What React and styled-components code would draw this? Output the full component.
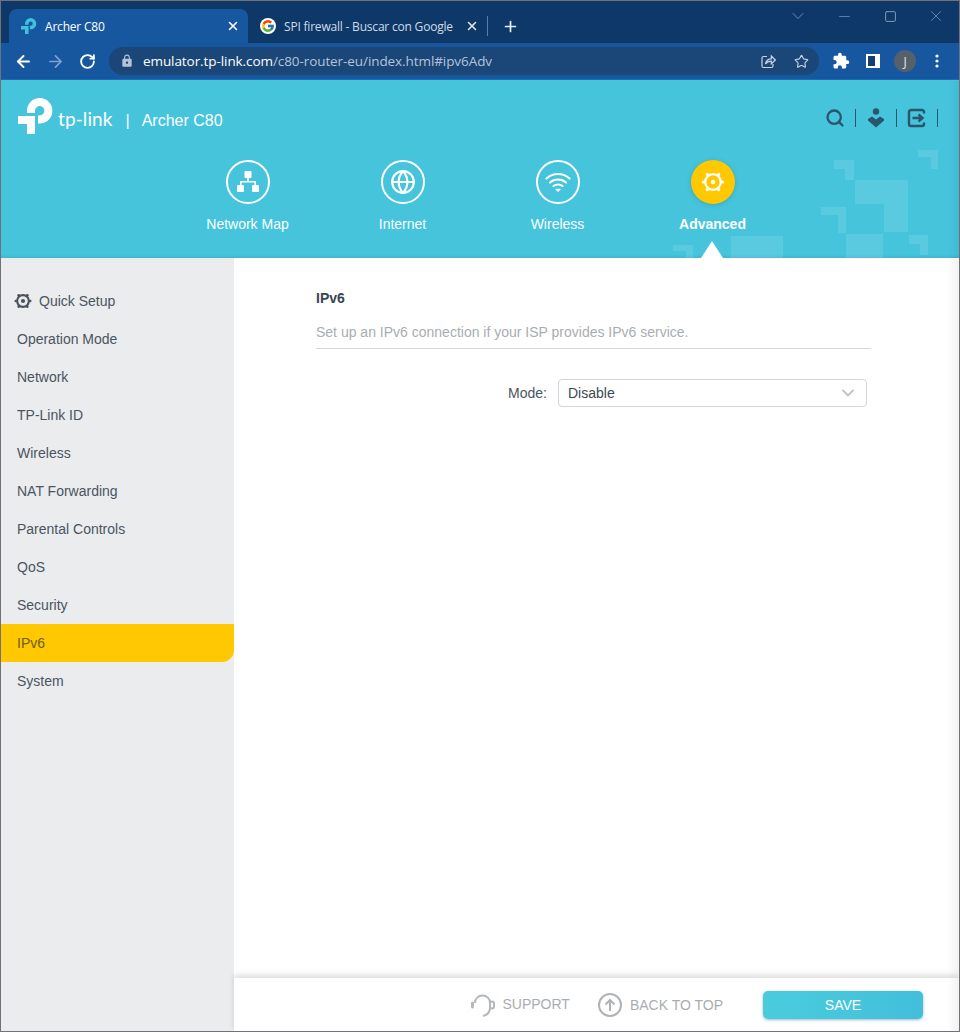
import React from "react";
import styled, { createGlobalStyle } from "styled-components";
import { FcGoogle } from "react-icons/fc";
import { MdExtension, MdLock } from "react-icons/md";
import { ArrowLeft, ArrowRight, RotateCw, Star, Plus, X, ChevronDown, Minus, Square, Search, Globe } from "lucide-react";

const Global = createGlobalStyle`
  html, body { margin: 0; padding: 0; background: #fff; }
  * { box-sizing: border-box; }
  #root { width: 960px; height: 1032px; overflow: hidden; }
`;

const Window = styled.div`
  position: relative;
  width: 960px; height: 1032px;
  border: 1px solid #6e7377;
  display: flex; flex-direction: column;
  font-family: "Liberation Sans", Arial, sans-serif;
  overflow: hidden;
`;

const TabBar = styled.div`
  height: 42px; flex: none;
  background: #0e3868;
  display: flex; align-items: flex-end;
  padding-left: 8px;
  font-family: "Open Sans", "Noto Sans", sans-serif;
  font-size: 12px;
`;
const Tab = styled.div`
  width: 239px; height: 34px;
  display: flex; align-items: center;
  padding: 0 8px 0 12px;
  border-radius: 8px 8px 0 0;
  background: ${p => (p.$active ? "#17579f" : "transparent")};
  color: ${p => (p.$active ? "#fff" : "#cfdbe9")};
  gap: 8px;
`;
const TabTitle = styled.span`
  flex: 1;
  white-space: nowrap;
  letter-spacing: -0.2px;
`;
const TabSeparator = styled.div`
  width: 1px; height: 20px; background: #5d7da2;
  margin: 0 0 7px 0;
`;
const NewTab = styled.div`
  width: 44px; height: 34px; display: flex; align-items: center; justify-content: center;
  color: #e6edf5;
`;
const GoogleBadge = styled.span`
  width: 16px; height: 16px; border-radius: 50%; background: #fff;
  display: flex; align-items: center; justify-content: center;
`;
const WindowControls = styled.div`
  margin-left: auto; align-self: flex-start;
  display: flex; color: #7f9ab8;
  height: 30px; align-items: center;
`;
const WindowButton = styled.div`
  width: 46px; display: flex; align-items: center; justify-content: center;
`;

const Toolbar = styled.div`
  height: 37px; flex: none;
  background: #17579f;
  display: flex; align-items: center;
  border-bottom: 1px solid #1d6bb0;
  color: #fff;
`;
const NavButtons = styled.div`
  display: flex; align-items: center; width: 108px;
`;
const NavButton = styled.div`
  width: 32px; height: 28px;
  display: flex; align-items: center; justify-content: center;
  color: ${p => (p.$dim ? "#7fa3cf" : "#fff")};
  &:first-child { margin-left: 6px; }
`;
const Omnibox = styled.div`
  width: 710px; height: 28px; border-radius: 14px;
  background: #1b4678;
  display: flex; align-items: center;
  padding: 0 1px 0 11px;
  color: #b4c4d8;
  font-family: "Open Sans", "Noto Sans", sans-serif;
  font-size: 13.5px;
`;
const Url = styled.span`
  margin-left: 9px; flex: 1; white-space: nowrap;
  letter-spacing: -0.08px;
  b { font-weight: 400; color: #fff; }
`;
const OmniIcon = styled.span`
  width: 33px; display: flex; align-items: center; justify-content: center; color: #c6d3e3;
`;
const ToolActions = styled.div`
  display: flex; align-items: center; padding-left: 6px;
`;
const ToolAction = styled.div`
  width: 32px; height: 28px; display: flex; align-items: center; justify-content: center;
`;
const Avatar = styled.div`
  width: 22px; height: 22px; border-radius: 50%; background: #55606a;
  color: #e4e8ec; font-size: 12px; font-family: "Open Sans", sans-serif;
  display: flex; align-items: center; justify-content: center;
`;
const PanelIcon = styled.div`
  width: 14px; height: 14px; border: 2px solid #fff; border-right-width: 5px; background: #123f75;
`;

const Header = styled.header`
  position: relative;
  height: 178px; flex: none;
  background: #45c4dc;
  color: #fff;
  padding: 18px 0 0 17px;
  box-shadow: inset 0 -3px 3px -2px rgba(40,120,140,.25);
`;
const Decor = styled.svg`
  position: absolute; left: 0; top: 0; pointer-events: none;
`;
const TopRow = styled.div`
  position: relative;
  display: flex; align-items: center; height: 36px;
`;
const Brand = styled.div`
  display: flex; align-items: center; margin-top: 9px;
`;
const Wordmark = styled.span`
  font-family: Lato, "Open Sans", sans-serif;
  font-size: 19px; letter-spacing: 0.1px; margin-left: 4px; line-height: 1;
  position: relative; top: -2px;
`;
const Divider = styled.span`
  margin-left: 13px; font-size: 16px;
`;
const Model = styled.span`
  margin-left: 12px; font-size: 16px;
`;
const HeaderTools = styled.div`
  margin: 4px 21px 0 auto;
  display: flex; align-items: center; color: #29566a;
`;
const HeaderTool = styled.div`
  width: 41px; height: 18px; display: flex; align-items: center; justify-content: flex-start;
  padding-left: 10px;
  border-right: 1px solid #29566a;
`;
const Nav = styled.nav`
  position: relative;
  display: flex; margin: 26px 0 0 152px;
`;
const NavItem = styled.div`
  width: 155px; display: flex; flex-direction: column; align-items: center;
  font-size: 14px; font-weight: ${p => (p.$active ? 700 : 400)};
`;
const NavCircle = styled.div`
  width: 44px; height: 44px; border-radius: 50%;
  border: ${p => (p.$active ? "none" : "2px solid #fff")};
  background: ${p => (p.$active ? "#ffc800" : "transparent")};
  box-shadow: ${p => (p.$active ? "0 1px 4px rgba(60,110,120,.35)" : "none")};
  display: flex; align-items: center; justify-content: center;
  margin-bottom: 12px;
`;
const Pointer = styled.div`
  position: absolute; left: 700px; bottom: 0;
  width: 0; height: 0;
  border-left: 11px solid transparent; border-right: 11px solid transparent;
  border-bottom: 17px solid #fff;
`;

const Body = styled.div`
  flex: 1; display: flex; min-height: 0;
`;
const Sidebar = styled.aside`
  width: 233px; flex: none; background: #ebecee;
  padding-top: 24px;
  font-size: 14px; color: #4a555f;
`;
const SideItem = styled.div`
  height: 38px; display: flex; align-items: center;
  padding-left: ${p => (p.$icon ? "13px" : "16px")};
  gap: 7px;
  background: ${p => (p.$active ? "#ffc800" : "transparent")};
  color: ${p => (p.$active ? "#6e5d1c" : "inherit")};
  border-bottom-right-radius: ${p => (p.$active ? "12px" : "0")};
`;
const Main = styled.main`
  flex: 1; display: flex; flex-direction: column; background: #fff; min-width: 0;
`;
const Content = styled.section`
  flex: 1; padding: 32px 0 0 82px;
`;
const Title = styled.h1`
  margin: 0; font-size: 14px; line-height: 16px; font-weight: 700; color: #3a4550;
`;
const Description = styled.p`
  margin: 18px 0 0; width: 555px; height: 25px;
  font-size: 14px; line-height: 16px; color: #a9adb1;
  border-bottom: 1px solid #d5d7d9;
`;
const FormRow = styled.div`
  display: flex; align-items: center; margin-top: 30px; height: 28px;
  width: 551px;
`;
const FieldLabel = styled.label`
  width: 231px; text-align: right; font-size: 14px; color: #4a555f;
`;
const Select = styled.div`
  margin-left: 11px; flex: 1; height: 28px;
  border: 1px solid #d3d5d7; border-radius: 4px;
  display: flex; align-items: center; justify-content: space-between;
  padding: 0 8px 0 9px;
  font-size: 14px; color: #3d4750;
`;
const Footer = styled.footer`
  height: 53px; flex: none; background: #fff;
  box-shadow: 0 -3px 6px rgba(0,0,0,.14);
  display: flex; align-items: center; justify-content: flex-end;
  padding-right: 36px;
  color: #a9adb1; font-size: 14px;
`;
const FooterLink = styled.div`
  display: flex; align-items: center; gap: ${p => p.$space}px; margin-right: ${p => p.$gap}px;
`;
const SupportLabel = styled.span`
  margin-top: -2px;
`;
const SaveButton = styled.button`
  width: 160px; height: 28px; border: none; border-radius: 5px;
  background: linear-gradient(90deg, #4accdd, #42bfdb);
  color: #fff; font: 14px "Liberation Sans", Arial, sans-serif;
  box-shadow: 0 1px 3px rgba(60,120,140,.5);
`;
const RightShade = styled.div`
  position: absolute; right: 0; top: 80px; bottom: 0; width: 12px;
  background: linear-gradient(90deg, rgba(0,0,0,0), rgba(0,0,0,.05));
  pointer-events: none;
`;

const TpMark = ({ size = 36, color = "#fff" }) => (
  <svg width={size} height={size} viewBox="0 0 36 36" fill="none" stroke={color} strokeWidth="8">
    <path d="M0 22H13V36" />
    <path d="M13 15V12.800A8.700 8.700 0 1 1 21.700 21.500H20" />
  </svg>
);
const Hex = ({ size, color, sw = 2.200, dot = 2.200, ear = 1.600 }) => (
  <svg width={size} height={size} viewBox="0 0 24 24" fill="none" stroke={color} strokeWidth={sw}>
    <circle cx="12" cy="12" r="7.800" />
    <circle cx="6.300" cy="4.400" r={ear} fill={color} stroke="none" />
    <circle cx="17.700" cy="4.400" r={ear} fill={color} stroke="none" />
    <circle cx="6.300" cy="19.600" r={ear} fill={color} stroke="none" />
    <circle cx="17.700" cy="19.600" r={ear} fill={color} stroke="none" />
    <circle cx="2.400" cy="12" r={ear} fill={color} stroke="none" />
    <circle cx="21.600" cy="12" r={ear} fill={color} stroke="none" />
    <circle cx="12" cy="12" r={dot} fill={color} stroke="none" />
  </svg>
);
const NetworkIcon = () => (
  <svg width="30" height="30" viewBox="0 0 30 30" fill="#fff">
    <rect x="11.500" y="4" width="7" height="7" rx="1" />
    <rect x="4" y="18" width="7" height="7" rx="1" />
    <rect x="19" y="18" width="7" height="7" rx="1" />
    <path d="M14.200 11h1.600v3h7.200v4h-1.600v-2.400H8.600V18H7v-4h7.200z" />
  </svg>
);
const WifiIcon = () => (
  <svg width="28" height="28" viewBox="0 0 28 28" fill="none" stroke="#fff" strokeWidth="2.200" strokeLinecap="round">
    <path d="M2.500 10.500C9 4.500 19 4.500 25.500 10.500" />
    <path d="M6 14.500C10.500 10.500 17.500 10.500 22 14.500" />
    <path d="M9.500 18C12 16 16 16 18.500 18" />
    <path d="M12 21.500L14 23.500L16 21.500Z" fill="#fff" strokeWidth="1" />
  </svg>
);
const UserIcon = () => (
  <svg width="20" height="22" viewBox="0 0 20 22" fill="currentColor">
    <circle cx="10" cy="4.500" r="3.200" />
    <path d="M2 12L6 9.500l4 3 4-3 4 2.500v1.500L10 20.500 2 13.500z" />
  </svg>
);
const LogoutIcon = () => (
  <svg width="20" height="20" viewBox="0 0 20 20" fill="none" stroke="currentColor" strokeWidth="2.400">
    <path d="M17 5.500V4a2 2 0 0 0-2-2H4a2 2 0 0 0-2 2v12a2 2 0 0 0 2 2h11a2 2 0 0 0 2-2v-1.500" />
    <path d="M5.500 10H15M11.500 6.500L15.500 10L11.500 13.500" />
  </svg>
);
const ShareIcon = () => (
  <svg width="15" height="15" viewBox="0 0 15 15" fill="none" stroke="currentColor" strokeWidth="1.200">
    <path d="M6 2.500H2.500a1.500 1.500 0 0 0-1.500 1.500v8a1.500 1.500 0 0 0 1.500 1.500h8A1.500 1.500 0 0 0 12 12v-2" />
    <path d="M4.500 10c.5-3.500 3-5.200 5.800-5.200V2L14.300 6l-4 3.800V7.200C8 7.200 5.800 8 4.500 10z" />
  </svg>
);
const HeadsetIcon = () => (
  <svg width="25" height="26" viewBox="0 0 25 26" fill="none" stroke="#b5b8bb" strokeWidth="2">
    <path d="M5 11C5 1 20 1 20 11V16C20 20 17 23 13 24" />
    <rect x="1" y="9.500" width="3" height="7" rx="1.500" fill="#b5b8bb" stroke="none" />
    <rect x="20" y="9.500" width="4" height="7" rx="2" />
  </svg>
);
const BackTopIcon = () => (
  <svg width="24" height="24" viewBox="0 0 24 24" fill="none" stroke="#b0b3b6" strokeWidth="2">
    <circle cx="12" cy="12" r="11" />
    <path d="M12 18V7M7.500 11.500L12 7L16.500 11.500" />
  </svg>
);
const Squares = () => (
  <Decor width="960" height="178" viewBox="0 80 960 178" fill="#fff" fillOpacity="0.11">
    <path d="M917 150h20v19h-7v-12h-13z" />
    <path d="M833 160h20v20h-9v-11h-11z" />
    <path d="M854 180h53v52h-24v-28h-29z" />
    <path d="M820 207h25v26h-8v-18h-17z" />
    <path d="M845 234h37v24h-37z" />
    <path d="M908 235h19v20h-8v-11h-11z" />
    <path d="M730 236h52v22h-52z" />
    <path d="M672 245h20v13h-7v-7h-13z" />
  </Decor>
);

const items = ["Operation Mode", "Network", "TP-Link ID", "Wireless", "NAT Forwarding", "Parental Controls", "QoS", "Security", "IPv6", "System"];

export default function App() {
  return (
    <Window>
      <Global />
      <TabBar>
        <Tab $active>
          <TpMark size={16} color="#3fc1dc" />
          <TabTitle>Archer C80</TabTitle>
          <X size={14} strokeWidth={2.6} color="#fff" />
        </Tab>
        <Tab>
          <GoogleBadge><FcGoogle size={14} /></GoogleBadge>
          <TabTitle>SPI firewall - Buscar con Google</TabTitle>
          <X size={14} strokeWidth={2.6} color="#dfe7f0" />
        </Tab>
        <TabSeparator />
        <NewTab><Plus size={17} strokeWidth={2.4} /></NewTab>
        <WindowControls>
          <WindowButton><ChevronDown size={20} strokeWidth={1} /></WindowButton>
          <WindowButton><Minus size={17} strokeWidth={1} /></WindowButton>
          <WindowButton><Square size={13} strokeWidth={1} absoluteStrokeWidth /></WindowButton>
          <WindowButton><X size={18} strokeWidth={1} /></WindowButton>
        </WindowControls>
      </TabBar>
      <Toolbar>
        <NavButtons>
          <NavButton><ArrowLeft size={19} strokeWidth={2.4} /></NavButton>
          <NavButton $dim><ArrowRight size={19} strokeWidth={2.2} /></NavButton>
          <NavButton><RotateCw size={17} strokeWidth={2.6} /></NavButton>
        </NavButtons>
        <Omnibox>
          <MdLock size={14} />
          <Url><b>emulator.tp-link.com</b>/c80-router-eu/index.html#ipv6Adv</Url>
          <OmniIcon><ShareIcon /></OmniIcon>
          <OmniIcon><Star size={15} strokeWidth={1.8} /></OmniIcon>
        </Omnibox>
        <ToolActions>
          <ToolAction><MdExtension size={18} /></ToolAction>
          <ToolAction><PanelIcon /></ToolAction>
          <ToolAction><Avatar>J</Avatar></ToolAction>
          <ToolAction>
            <svg width="4" height="14" viewBox="0 0 4 14" fill="#fff"><circle cx="2" cy="2" r="1.600" /><circle cx="2" cy="7" r="1.600" /><circle cx="2" cy="12" r="1.600" /></svg>
          </ToolAction>
        </ToolActions>
      </Toolbar>
      <Header>
        <Squares />
        <TopRow>
          <TpMark size={36} />
          <Brand>
            <Wordmark>tp-link</Wordmark>
            <Divider>|</Divider>
            <Model>Archer C80</Model>
          </Brand>
          <HeaderTools>
            <HeaderTool><Search size={20} strokeWidth={2.800} /></HeaderTool>
            <HeaderTool><UserIcon /></HeaderTool>
            <HeaderTool><LogoutIcon /></HeaderTool>
          </HeaderTools>
        </TopRow>
        <Nav>
          <NavItem><NavCircle><NetworkIcon /></NavCircle>Network Map</NavItem>
          <NavItem><NavCircle><Globe size={26} strokeWidth={2} /></NavCircle>Internet</NavItem>
          <NavItem><NavCircle><WifiIcon /></NavCircle>Wireless</NavItem>
          <NavItem $active><NavCircle $active><Hex size={24} color="#fff" /></NavCircle>Advanced</NavItem>
        </Nav>
        <Pointer />
      </Header>
      <Body>
        <Sidebar>
          <SideItem $icon><Hex size={18} color="#49535c" sw={2.800} dot={2.800} ear={1.800} />Quick Setup</SideItem>
          {items.map(i => <SideItem key={i} $active={i === "IPv6"}>{i}</SideItem>)}
        </Sidebar>
        <Main>
          <Content>
            <Title>IPv6</Title>
            <Description>Set up an IPv6 connection if your ISP provides IPv6 service.</Description>
            <FormRow>
              <FieldLabel>Mode:</FieldLabel>
              <Select>Disable<ChevronDown size={20} strokeWidth={2.200} color="#c0c3c6" /></Select>
            </FormRow>
          </Content>
          <Footer>
            <FooterLink $gap={28} $space={7}><HeadsetIcon /><SupportLabel>SUPPORT</SupportLabel></FooterLink>
            <FooterLink $gap={40} $space={8}><BackTopIcon />BACK TO TOP</FooterLink>
            <SaveButton>SAVE</SaveButton>
          </Footer>
        </Main>
      </Body>
      <RightShade />
    </Window>
  );
}
